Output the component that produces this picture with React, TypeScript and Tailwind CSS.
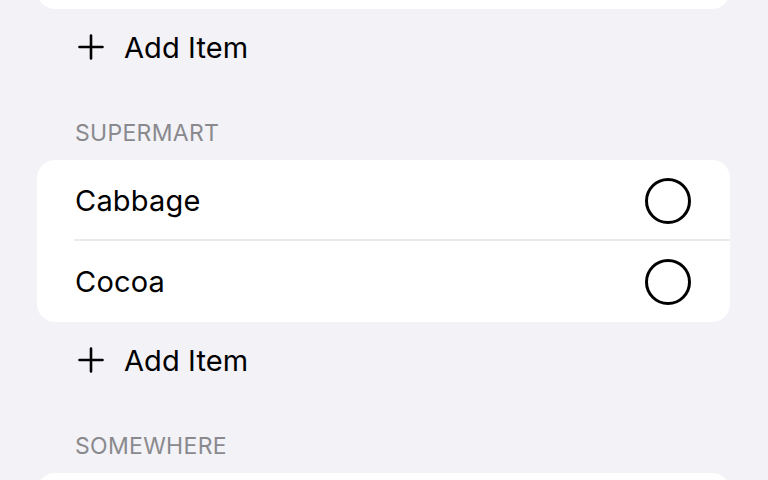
import React from "react";

interface Section {
  title: string;
  items: string[];
}

const sections: Section[] = [
  { title: "Supermart", items: ["Cabbage", "Cocoa"] },
  { title: "Somewhere", items: [] },
];

function PlusIcon() {
  return (
    <svg width="28" height="28" viewBox="0 0 28 28" fill="none">
      <path d="M14 2.5v23M2.5 14h23" stroke="#000" strokeWidth="2.6" strokeLinecap="round" />
    </svg>
  );
}

function AddItem() {
  return (
    <button className="flex h-[76px] w-full items-center pl-[77px] text-left">
      <PlusIcon />
      <span className="ml-[19px] text-[29px] leading-none tracking-[0.1px] text-black">Add Item</span>
    </button>
  );
}

function Row({ label, last }: { label: string; last: boolean }) {
  return (
    <div className="relative flex h-[81px] items-center pl-[38px] pr-[39px]">
      <span className="flex-1 text-[29px] leading-none tracking-[0.2px] text-black">{label}</span>
      <span className="h-[46px] w-[46px] rounded-full border-[3px] border-black" />
      {!last && <div className="absolute bottom-0 left-[37px] right-0 h-[2px] bg-[#e9e9ee]" />}
    </div>
  );
}

export default function App() {
  return (
    <div
      className="h-[480px] w-[768px] overflow-hidden bg-[#f2f2f7]"
      style={{ fontFamily: "Inter, 'Noto Sans', sans-serif" }}
    >
      {/* tail of the previous list */}
      <div className="-mt-[72px] ml-[37px] mr-[38px] h-[81px] rounded-[18px] bg-white" />
      <AddItem />
      {sections.map((s) => (
        <div key={s.title}>
          <div className="pb-[14px] pl-[75px] pt-[35px] text-[23px] uppercase leading-[26px] tracking-[0.3px] text-[#8a8a8e]">
            {s.title}
          </div>
          <div className="ml-[37px] mr-[38px] min-h-[81px] rounded-[18px] bg-white">
            {s.items.map((item, i) => (
              <Row key={item} label={item} last={i === s.items.length - 1} />
            ))}
          </div>
          {s.items.length > 0 && <AddItem />}
        </div>
      ))}
    </div>
  );
}
